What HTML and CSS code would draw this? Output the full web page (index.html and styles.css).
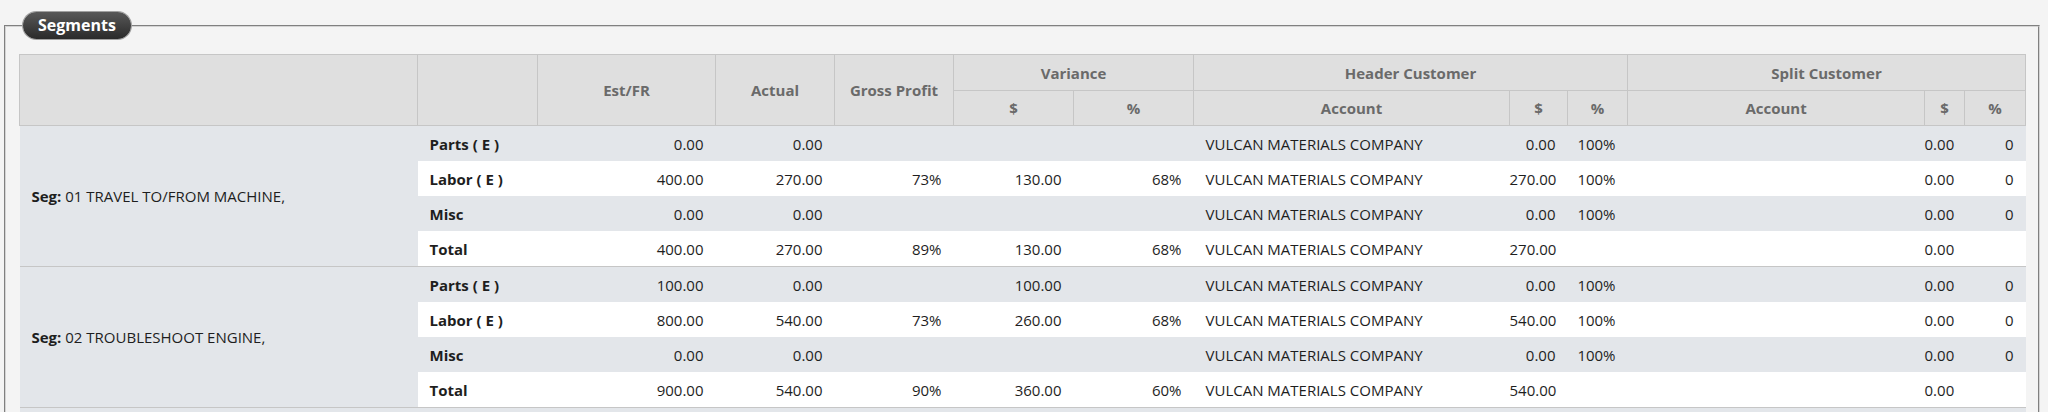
FILE: index.html
```html
<!DOCTYPE html>
<html>
<head>
<meta charset="utf-8">
<link rel="stylesheet" href="styles.css">
</head>
<body>
<fieldset class="panel">
  <legend class="pill">Segments</legend>
  <table class="seg-table">
    <colgroup>
      <col class="c-seg"><col class="c-type"><col class="c-est"><col class="c-act"><col class="c-gp">
      <col class="c-vd"><col class="c-vp"><col class="c-hacc"><col class="c-hd"><col class="c-hp">
      <col class="c-sacc"><col class="c-sd"><col class="c-sp">
    </colgroup>
    <thead>
      <tr class="h1">
        <th rowspan="2"></th>
        <th rowspan="2"></th>
        <th rowspan="2">Est/FR</th>
        <th rowspan="2">Actual</th>
        <th rowspan="2">Gross Profit</th>
        <th colspan="2">Variance</th>
        <th colspan="3">Header Customer</th>
        <th colspan="3">Split Customer</th>
      </tr>
      <tr class="h2">
        <th>$</th><th>%</th>
        <th>Account</th><th>$</th><th>%</th>
        <th>Account</th><th>$</th><th>%</th>
      </tr>
    </thead>
    <tbody class="segment">
      <tr class="odd">
        <td rowspan="4" class="seg-name"><b>Seg:</b> 01 TRAVEL TO/FROM MACHINE,</td>
        <td class="lbl">Parts ( E )</td><td class="num">0.00</td><td class="num">0.00</td><td class="num"></td>
        <td class="num"></td><td class="num"></td><td class="acc">VULCAN MATERIALS COMPANY</td><td class="num tight">0.00</td><td class="num tight">100%</td>
        <td class="acc"></td><td class="num tight">0.00</td><td class="num">0</td>
      </tr>
      <tr class="even">
        <td class="lbl">Labor ( E )</td><td class="num">400.00</td><td class="num">270.00</td><td class="num">73%</td>
        <td class="num">130.00</td><td class="num">68%</td><td class="acc">VULCAN MATERIALS COMPANY</td><td class="num tight">270.00</td><td class="num tight">100%</td>
        <td class="acc"></td><td class="num tight">0.00</td><td class="num">0</td>
      </tr>
      <tr class="odd">
        <td class="lbl">Misc</td><td class="num">0.00</td><td class="num">0.00</td><td class="num"></td>
        <td class="num"></td><td class="num"></td><td class="acc">VULCAN MATERIALS COMPANY</td><td class="num tight">0.00</td><td class="num tight">100%</td>
        <td class="acc"></td><td class="num tight">0.00</td><td class="num">0</td>
      </tr>
      <tr class="even">
        <td class="lbl">Total</td><td class="num">400.00</td><td class="num">270.00</td><td class="num">89%</td>
        <td class="num">130.00</td><td class="num">68%</td><td class="acc">VULCAN MATERIALS COMPANY</td><td class="num tight">270.00</td><td class="num tight"></td>
        <td class="acc"></td><td class="num tight">0.00</td><td class="num"></td>
      </tr>
    </tbody>
    <tbody class="segment">
      <tr class="odd">
        <td rowspan="4" class="seg-name"><b>Seg:</b> 02 TROUBLESHOOT ENGINE,</td>
        <td class="lbl">Parts ( E )</td><td class="num">100.00</td><td class="num">0.00</td><td class="num"></td>
        <td class="num">100.00</td><td class="num"></td><td class="acc">VULCAN MATERIALS COMPANY</td><td class="num tight">0.00</td><td class="num tight">100%</td>
        <td class="acc"></td><td class="num tight">0.00</td><td class="num">0</td>
      </tr>
      <tr class="even">
        <td class="lbl">Labor ( E )</td><td class="num">800.00</td><td class="num">540.00</td><td class="num">73%</td>
        <td class="num">260.00</td><td class="num">68%</td><td class="acc">VULCAN MATERIALS COMPANY</td><td class="num tight">540.00</td><td class="num tight">100%</td>
        <td class="acc"></td><td class="num tight">0.00</td><td class="num">0</td>
      </tr>
      <tr class="odd">
        <td class="lbl">Misc</td><td class="num">0.00</td><td class="num">0.00</td><td class="num"></td>
        <td class="num"></td><td class="num"></td><td class="acc">VULCAN MATERIALS COMPANY</td><td class="num tight">0.00</td><td class="num tight">100%</td>
        <td class="acc"></td><td class="num tight">0.00</td><td class="num">0</td>
      </tr>
      <tr class="even">
        <td class="lbl">Total</td><td class="num">900.00</td><td class="num">540.00</td><td class="num">90%</td>
        <td class="num">360.00</td><td class="num">60%</td><td class="acc">VULCAN MATERIALS COMPANY</td><td class="num tight">540.00</td><td class="num tight"></td>
        <td class="acc"></td><td class="num tight">0.00</td><td class="num"></td>
      </tr>
    </tbody>
    <tbody class="segment">
      <tr class="odd">
        <td class="seg-name"></td>
        <td class="lbl"></td><td></td><td></td><td></td><td></td><td></td><td></td><td></td><td></td><td></td><td></td><td></td>
      </tr>
    </tbody>
  </table>
</fieldset>
</body>
</html>
```

FILE: styles.css
```css
html, body {
  margin: 0;
  padding: 0;
  background: #f4f4f4;
  font-family: "Open Sans", "Noto Sans", sans-serif;
  font-size: 15px;
  color: #1e1e1e;
}

.panel {
  margin: 12px 8px 0 4px;
  padding: 15px 13px 10px 13px;
  border: 2px groove #d4d4d4;
  min-inline-size: 0;
}

.pill {
  margin-left: 4px;
  padding: 0 15px;
  height: 27px;
  line-height: 27px;
  box-sizing: border-box;
  border-radius: 14px;
  background: linear-gradient(#585858, #2a2a2a);
  color: #fff;
  font-weight: 700;
  font-size: 16px;
  box-shadow: 0 0 0 1px #a0a0a0;
}

.seg-table {
  width: 100%;
  table-layout: fixed;
  border-collapse: collapse;
}

.c-seg { width: 398px; }
.c-type { width: 120px; }
.c-est { width: 178px; }
.c-act { width: 119px; }
.c-gp { width: 119px; }
.c-vd { width: 120px; }
.c-vp { width: 120px; }
.c-hacc { width: 316px; }
.c-hd { width: 58px; }
.c-hp { width: 60px; }
.c-sacc { width: 297px; }
.c-sd { width: 40px; }
.c-sp { width: 61px; }

.seg-table th {
  background: #dfdfdf;
  border: 1px solid #c6c6c6;
  color: #6a6a6a;
  font-weight: 700;
  text-align: center;
  padding: 0 4px;
  white-space: nowrap;
}

.h1 { height: 36px; }
.h2 { height: 35px; }

.seg-table td {
  height: 35px;
  padding: 0 12px;
  white-space: nowrap;
  overflow: visible;
}

.seg-table td.tight {
  padding-left: 0;
}

.segment {
  border-top: 1px solid #c6c6c6;
  border-bottom: 1px solid #c6c6c6;
}

.seg-table tr.odd td { background: #e3e6ea; }
.seg-table tr.even td { background: #ffffff; }
.seg-table td.seg-name { background: #e3e6ea; }

.lbl { font-weight: 700; }
.num { text-align: right; }
.acc { text-align: left; }
```
